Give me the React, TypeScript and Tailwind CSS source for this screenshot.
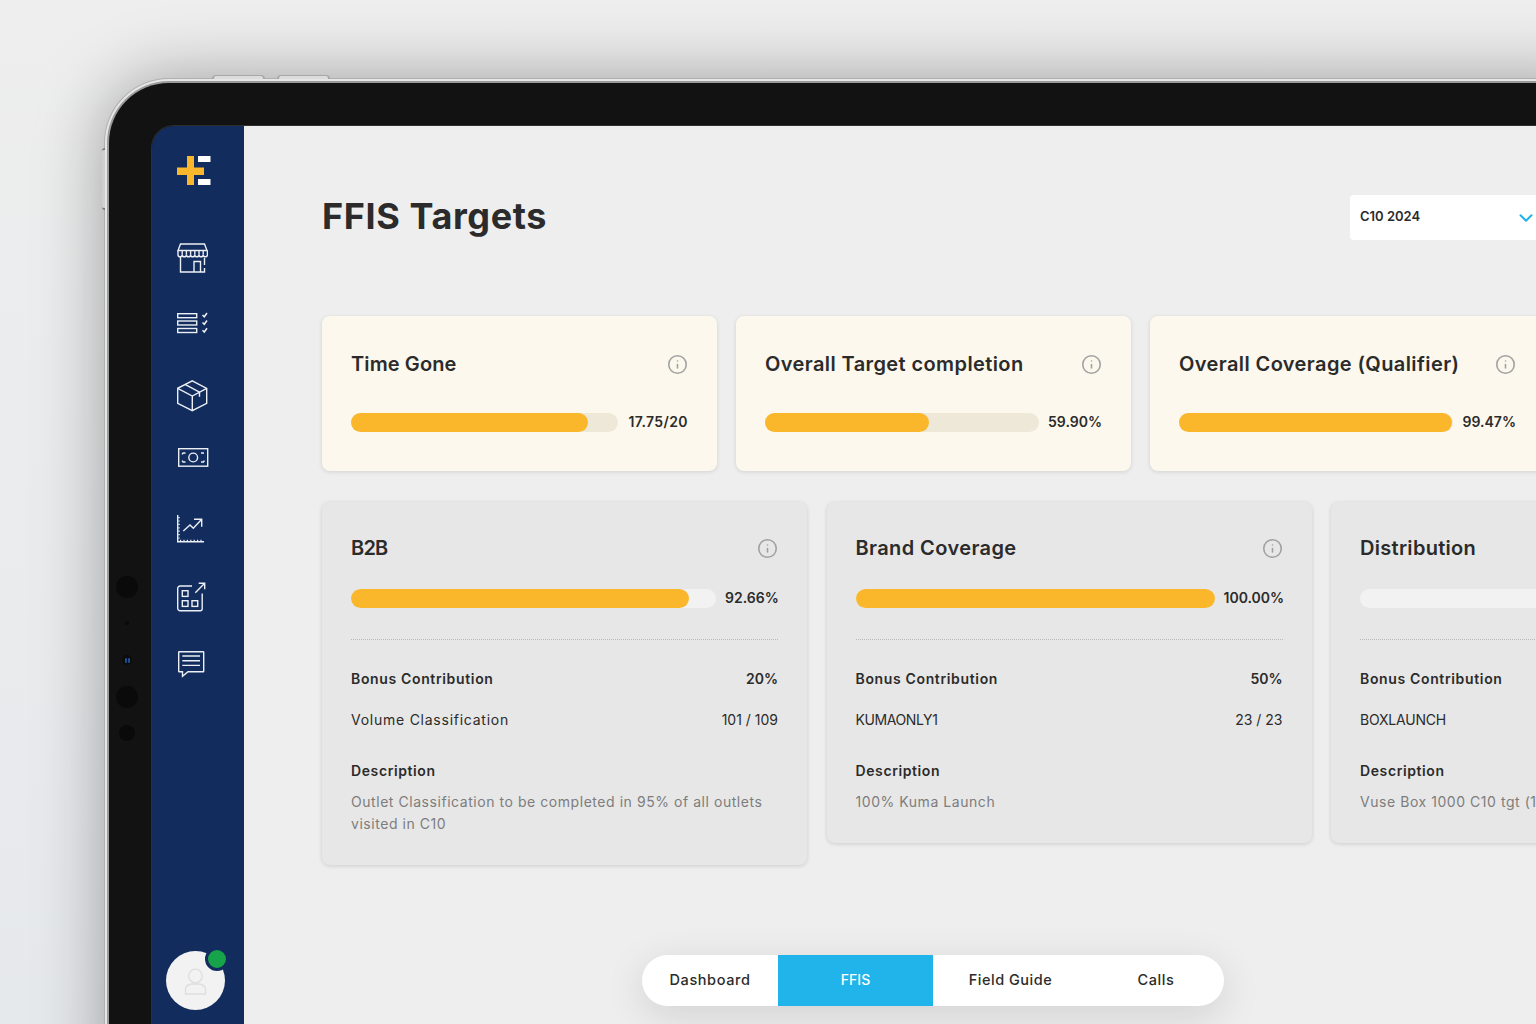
import React from 'react';
import { ChevronDown, Info } from 'lucide-react';

const topCards = [
  { title: 'Time Gone', titleClass: 'tracking-[0.1px]', value: '17.75/20', pct: 88.75, valueClass: 'w-[61px] tracking-[0.4px]' },
  { title: 'Overall Target completion', titleClass: 'tracking-[0.4px]', value: '59.90%', pct: 59.9, valueClass: 'w-[54px]' },
  { title: 'Overall Coverage (Qualifier)', titleClass: 'tracking-[0.4px]', value: '99.47%', pct: 99.47, valueClass: 'w-[54px]' },
];

const targetCards = [
  {
    title: 'B2B',
    titleClass: 'tracking-[-0.8px]',
    value: '92.66%',
    pct: 92.66,
    valueClass: 'w-[53px]',
    bonus: '20%',
    label: 'Volume Classification',
    labelClass: 'tracking-[0.75px]',
    count: '101 / 109',
    description: 'Outlet Classification to be completed in 95% of all outlets visited in C10',
  },
  {
    title: 'Brand Coverage',
    titleClass: 'tracking-[0.4px]',
    value: '100.00%',
    pct: 100,
    valueClass: 'w-[59px]',
    bonus: '50%',
    label: 'KUMAONLY1',
    labelClass: 'tracking-[-0.4px]',
    count: '23 / 23',
    description: '100% Kuma Launch',
  },
  {
    title: 'Distribution',
    titleClass: 'tracking-[0.3px]',
    value: '0.00%',
    pct: 0,
    valueClass: 'w-[53px]',
    bonus: '30%',
    label: 'BOXLAUNCH',
    labelClass: 'tracking-[-0.2px]',
    count: '0 / 1',
    description: 'Vuse Box 1000 C10 tgt (100%)',
  },
];

const navItems = ['Dashboard', 'FFIS', 'Field Guide', 'Calls'];

const Logo = () => (
  <svg width="34" height="30" viewBox="0 0 34 30" className="block">
    <rect x="0" y="11.5" width="27" height="7.5" fill="#fbb72c" />
    <rect x="10" y="0" width="7" height="29" fill="#fbb72c" />
    <rect x="21" y="0" width="12.5" height="6" fill="#ffffff" />
    <rect x="21" y="23" width="12.5" height="6" fill="#ffffff" />
  </svg>
);

const iconProps = {
  fill: 'none',
  stroke: '#eceff4',
  strokeWidth: 1.4,
  className: 'block',
};

const StoreIcon = () => (
  <svg width="31" height="30" viewBox="0 0 31 30" {...iconProps}>
    <path d="M3.5 1h24l2.5 6.5H1z" />
    <path d="M1 7.5v4.2a2.1 2.1 0 0 0 4.2 0 2.1 2.1 0 0 0 4.2 0 2.1 2.1 0 0 0 4.2 0 2.1 2.1 0 0 0 4.2 0 2.1 2.1 0 0 0 4.2 0 2.1 2.1 0 0 0 4.2 0 2.1 2.1 0 0 0 4.2 0V7.5" />
    <path d="M5.2 7.5v4.2M9.4 7.5v4.2M13.6 7.5v4.2M17.8 7.5v4.2M22 7.5v4.2M26.2 7.5v4.2" />
    <path d="M3.5 14v15h24V25M27.5 22V15" />
    <path d="M17 29V18.5h6.5V29" />
  </svg>
);

const ChecklistIcon = () => (
  <svg width="31" height="22" viewBox="0 0 31 22" {...iconProps}>
    <rect x="0.7" y="1.7" width="19" height="4" />
    <rect x="0.7" y="9" width="19" height="4" />
    <rect x="0.7" y="16.5" width="19" height="4" />
    <path d="M25.5 3l1.8 1.8L30 1M25.5 10.5l1.8 1.8 2.7-3.8M25.5 18.2l1.8 1.8 2.7-3.8" strokeWidth="1.5" />
  </svg>
);

const BoxIcon = () => (
  <svg width="31" height="32" viewBox="0 0 31 32" {...iconProps}>
    <path d="M15.3 0.8l14.4 7.5v15l-14.4 7.4-14.6-7.4v-15z" />
    <path d="M0.7 8.3l14.6 7.7 14.4-7.7M15.3 16v14.7" />
    <path d="M8 4.4l14.5 7.8v4.5" />
  </svg>
);

const MoneyIcon = () => (
  <svg width="31" height="20" viewBox="0 0 31 20" {...iconProps}>
    <rect x="0.7" y="0.7" width="29" height="17.5" />
    <circle cx="15.2" cy="9.5" r="4.4" />
    <path d="M4.5 5h3M4.5 5v1.5M26 5h-3M4.5 14h3M4.5 14v-1.5M26 14h-3M26 14v-1.5" />
  </svg>
);

const ChartIcon = () => (
  <svg width="28" height="28" viewBox="0 0 28 28" {...iconProps}>
    <path d="M0.7 0v26.8H27" />
    <path d="M2 2v22M3 25.5h23" strokeDasharray="1.2 2.2" />
    <path d="M6.3 16l6.7-6 3.3 3.3L24.7 4.3M17 4.3h7.7v7.4" />
  </svg>
);

const AppsIcon = () => (
  <svg width="29" height="30" viewBox="0 0 29 30" {...iconProps}>
    <path d="M15 4H3.2A2.5 2.5 0 0 0 0.7 6.5v19.7a2.5 2.5 0 0 0 2.5 2.5h20a2 2 0 0 0 2-2V11.5" />
    <rect x="5.3" y="8.7" width="5.7" height="5.7" />
    <rect x="5.3" y="18.7" width="5.7" height="5.7" />
    <rect x="15" y="18.7" width="5.7" height="5.7" />
    <path d="M18.3 10.7l9.4-9.4M21.7 1.3h6v6" />
  </svg>
);

const ChatIcon = () => (
  <svg width="27" height="27" viewBox="0 0 27 27" {...iconProps}>
    <path d="M0.7 1.2a0.5 0.5 0 0 1 0.5-0.5h24a0.5 0.5 0 0 1 0.5 0.5v19a0.5 0.5 0 0 1-0.5 0.5H10l-5.5 4.6v-4.6H1.2a0.5 0.5 0 0 1-0.5-0.5z" />
    <path d="M4.3 5h17.7M4.3 9.7h17.7M4.3 14.4h17.7" />
  </svg>
);

const AvatarIcon = () => (
  <svg width="59" height="59" viewBox="0 0 59 59" fill="none" stroke="#dedede" strokeWidth="1.3" className="block">
    <circle cx="29.4" cy="25" r="6.8" />
    <path d="M19.5 43v-4.5c0-3 3-5 6-5.5h8c3 .5 6 2.5 6 5.5V43z" />
  </svg>
);

const ProgressBar = ({ pct, track, value, valueClass }: { pct: number; track: string; value: string; valueClass: string }) => (
  <div className="flex h-[19px] items-start gap-[9px]">
    <div className={`h-[19px] flex-1 rounded-full ${track}`}>
      <div className="h-full rounded-full bg-[#fbb72c]" style={{ width: `${pct}%` }}></div>
    </div>
    <span className={`${valueClass} shrink-0 text-right text-[14px] leading-[17px] font-semibold whitespace-nowrap text-[#2b2b2b]`}>{value}</span>
  </div>
);

const CardHeader = ({ title, titleClass }: { title: string; titleClass: string }) => (
  <div className="flex items-center justify-between">
    <h3 className={`${titleClass} text-[20px] leading-[24px] font-semibold whitespace-nowrap text-[#2b2b2b]`}>{title}</h3>
    <Info size={21} strokeWidth={1.8} className="shrink-0 text-[#a1a1a1]" />
  </div>
);

export default function App() {
  return (
    <div className="relative h-[1024px] w-[1536px] overflow-hidden bg-linear-to-b from-[#eeeeee] to-[#e6e9ec] pt-[81px] pl-[107px] font-['Inter','Liberation_Sans',sans-serif]">
      {/* hardware buttons */}
      <div className="absolute top-[75px] left-[212px] h-[4px] w-[53px] rounded-t-sm border-x-2 border-t border-[#a8a8a8] bg-[#dcdcdc]"></div>
      <div className="absolute top-[75px] left-[277px] h-[4px] w-[53px] rounded-t-sm border-x-2 border-t border-[#a8a8a8] bg-[#dcdcdc]"></div>
      <div className="absolute top-[148px] left-[102px] h-[62px] w-[3px] rounded-l-sm border-y-2 border-[#777777] bg-[#cfcfcf]"></div>

      <div className="h-[1100px] w-[1500px] rounded-tl-[62px] border-2 border-r-0 border-b-0 border-[#9a9a9a] bg-[#121212] pt-[43px] pl-[43px] shadow-[0_0_0_2px_#e6e6e6,0_0_0_3px_#b0b0b0,0_0_70px_rgba(0,0,0,0.36)]">
        <div className="flex h-[898px] w-[1384px] overflow-hidden rounded-tl-[22px] shadow-[0_0_0_1px_#2e2e2e]">
          {/* sidebar */}
          <aside className="flex h-full w-[92px] shrink-0 flex-col bg-[#132c5e] pl-[25px]">
            <div className="mt-[30px]"><Logo /></div>
            <div className="mt-[57px]"><StoreIcon /></div>
            <div className="mt-[39px]"><ChecklistIcon /></div>
            <div className="mt-[46px]"><BoxIcon /></div>
            <div className="mt-[36px] ml-[1px]"><MoneyIcon /></div>
            <div className="mt-[47px]"><ChartIcon /></div>
            <div className="mt-[39px]"><AppsIcon /></div>
            <div className="mt-[39px] ml-[1px]"><ChatIcon /></div>
            <div className="relative mt-auto mb-[14px] ml-[-11px] h-[59px] w-[59px] rounded-full bg-[#f2f2f2]">
              <AvatarIcon />
              <span className="absolute top-[-4px] left-[39px] h-[24px] w-[24px] rounded-full border-[3px] border-[#132c5e] bg-[#16a34a]"></span>
            </div>
          </aside>

          {/* main */}
          <main className="flex h-full min-w-0 flex-1 flex-col overflow-hidden bg-[#eeeeee] pl-[78px]">
            <div className="flex items-center justify-between pt-[69px]">
              <h1 className="mb-[2px] text-[36px] leading-[43px] font-bold tracking-[0.6px] whitespace-nowrap text-[#2b2b2b]">FFIS Targets</h1>
              <div className="mr-[-74px] flex h-[45px] w-[260px] shrink-0 items-center rounded-[4px] bg-white pl-[10px]">
                <span className="mb-[2px] text-[13px] font-semibold text-[#2b2b2b]">C10 2024</span>
                <ChevronDown size={22} strokeWidth={2.2} className="ml-[95px] text-[#20b4ea]" />
              </div>
            </div>

            <div className="mt-[76px] flex gap-[19px]">
              {topCards.map((card) => (
                <div key={card.title} className="h-[155px] w-[395px] shrink-0 rounded-[8px] bg-[#fcf8ed] px-[29px] pt-[36px] shadow-[0_1px_4px_rgba(0,0,0,0.12)]">
                  <CardHeader title={card.title} titleClass={card.titleClass} />
                  <div className="mt-[37px]">
                    <ProgressBar pct={card.pct} track="bg-[#ede8d8]" value={card.value} valueClass={card.valueClass} />
                  </div>
                </div>
              ))}
            </div>

            <div className="mt-[31px] flex items-start gap-[19.5px]">
              {targetCards.map((card) => (
                <div key={card.title} className="w-[485px] shrink-0 rounded-[8px] bg-[#e7e7e7] px-[29px] pt-[34px] pb-[30px] shadow-[0_1px_4px_rgba(0,0,0,0.14)]">
                  <CardHeader title={card.title} titleClass={card.titleClass} />
                  <div className="mt-[29px]">
                    <ProgressBar pct={card.pct} track="bg-[#f2f2f2]" value={card.value} valueClass={card.valueClass} />
                  </div>
                  <div className="mt-[31px] border-t border-dotted border-[#b9b9b9]"></div>
                  <div className="mt-[29px] flex justify-between text-[14px] leading-[20px] font-semibold text-[#2b2b2b]">
                    <span className="tracking-[0.65px]">Bonus Contribution</span>
                    <span>{card.bonus}</span>
                  </div>
                  <div className="mt-[21px] flex justify-between text-[14px] leading-[20px] text-[#2b2b2b]">
                    <span className={card.labelClass}>{card.label}</span>
                    <span>{card.count}</span>
                  </div>
                  <div className="mt-[31px] text-[14px] leading-[20px] font-semibold tracking-[0.6px] text-[#2b2b2b]">Description</div>
                  <p className="mt-[10px] text-[14px] leading-[22px] tracking-[0.55px] text-[#7d7d7d]">{card.description}</p>
                </div>
              ))}
            </div>

            {/* bottom nav */}
            <nav className="mt-auto mb-[18px] ml-[320px] flex h-[51px] w-[582px] shrink-0 overflow-hidden rounded-full bg-white shadow-[0_10px_40px_rgba(0,0,0,0.12)]">
              {navItems.map((item, index) => (
                <div
                  key={item}
                  className={
                    item === 'FFIS'
                      ? 'flex w-[155px] items-center justify-center bg-[#20b4ea] pb-[2px] text-[14px] font-medium text-white'
                      : index === 2
                        ? 'flex w-[155px] items-center justify-center pb-[2px] text-[14.5px] font-medium tracking-[0.5px] text-[#2b2b2b]'
                        : 'flex w-[136px] items-center justify-center pb-[2px] text-[14.5px] font-medium tracking-[0.6px] text-[#2b2b2b]'
                  }
                >
                  {item}
                </div>
              ))}
            </nav>
          </main>
        </div>
      </div>

      {/* front camera cluster */}
      <div className="absolute top-[576px] left-[116px] h-[22px] w-[22px] rounded-full bg-[#0a0a0a]"></div>
      <div className="absolute top-[621px] left-[125px] h-[4px] w-[4px] rounded-full bg-[#0a0a0a]"></div>
      <div className="absolute top-[655px] left-[122px] flex h-[10px] w-[10px] items-center justify-center gap-[1px] rounded-full bg-[#0c0c0c]">
        <span className="h-[5px] w-[2px] rounded-full bg-[#1d4f8c]"></span>
        <span className="h-[5px] w-[2px] rounded-full bg-[#1d4f8c]"></span>
      </div>
      <div className="absolute top-[686px] left-[116px] h-[22px] w-[22px] rounded-full bg-[#0a0a0a]"></div>
      <div className="absolute top-[725px] left-[119px] h-[16px] w-[16px] rounded-full bg-[#0a0a0a]"></div>
    </div>
  );
}
